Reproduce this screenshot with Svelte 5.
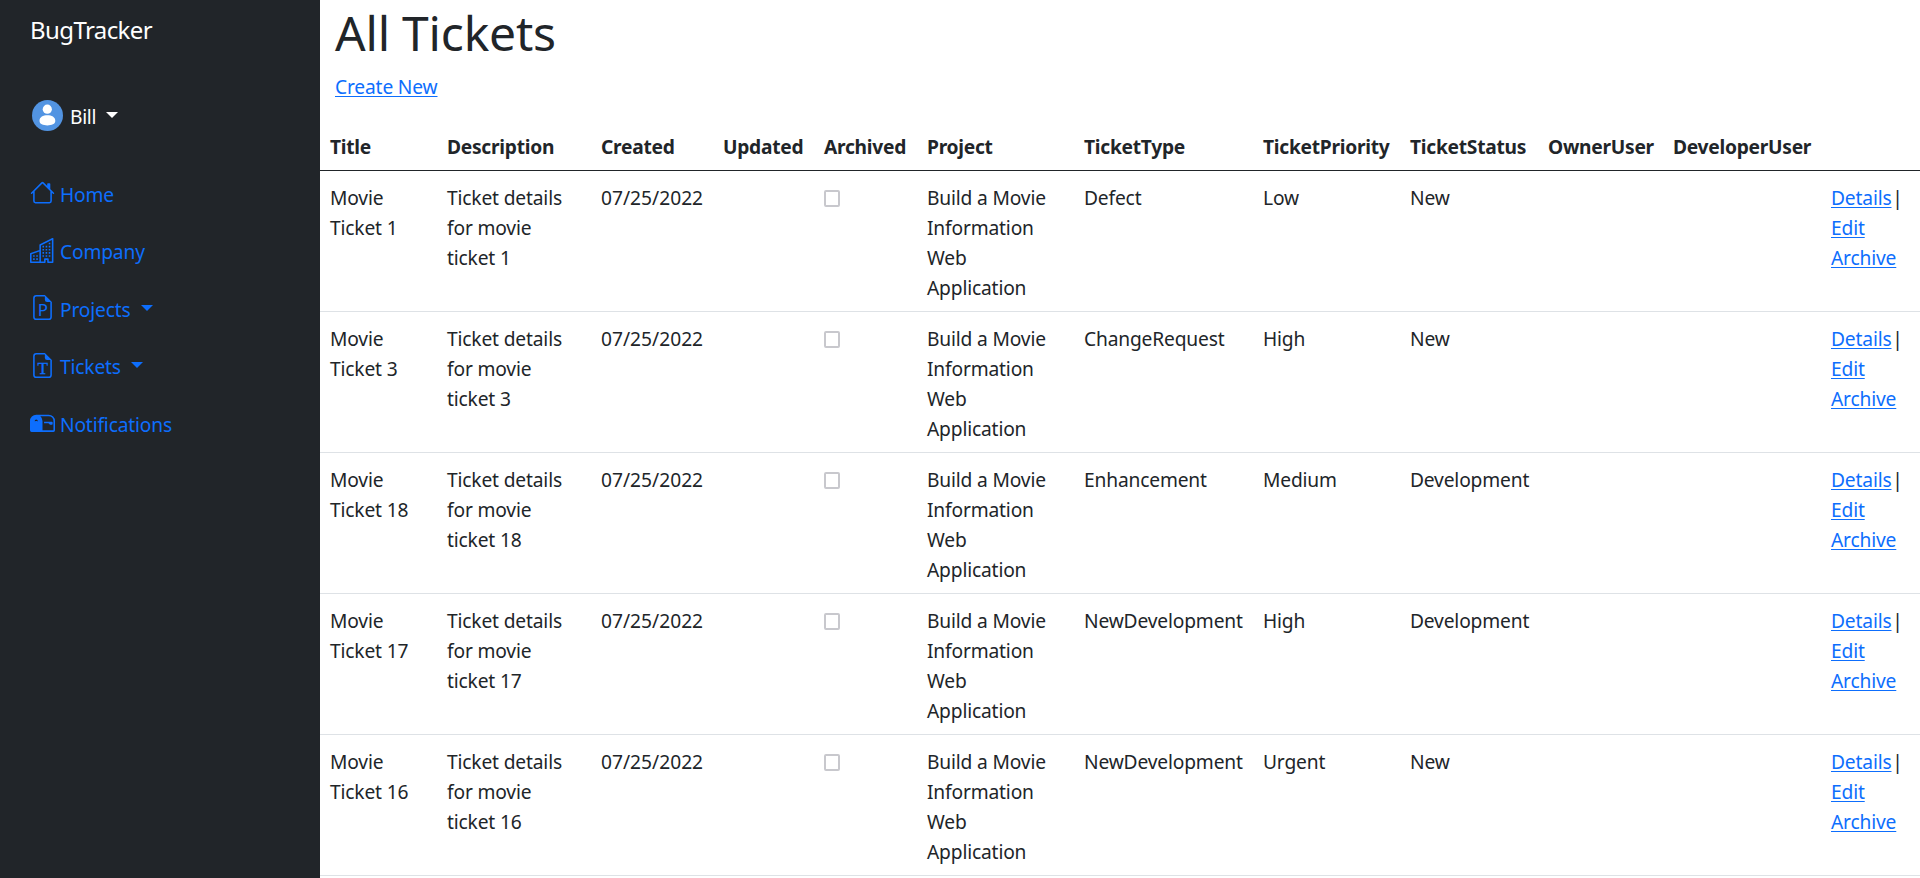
<script>
  const columns = [
    ['Title', 117], ['Description', 154], ['Created', 122], ['Updated', 101],
    ['Archived', 103], ['Project', 157], ['TicketType', 179], ['TicketPriority', 147],
    ['TicketStatus', 138], ['OwnerUser', 125], ['DeveloperUser', 158], ['', 99]
  ];
  const tickets = [
    { id: 1, type: 'Defect', priority: 'Low', status: 'New' },
    { id: 3, type: 'ChangeRequest', priority: 'High', status: 'New' },
    { id: 18, type: 'Enhancement', priority: 'Medium', status: 'Development' },
    { id: 17, type: 'NewDevelopment', priority: 'High', status: 'Development' },
    { id: 16, type: 'NewDevelopment', priority: 'Urgent', status: 'New' }
  ];
  const links = [
    { label: 'Home', icon: 'house' },
    { label: 'Company', icon: 'building' },
    { label: 'Projects', icon: 'file', letter: 'P', menu: true },
    { label: 'Tickets', icon: 'file', letter: 'T', menu: true },
    { label: 'Notifications', icon: 'mailbox' }
  ];
  const paths = {
    house: 'M2 13.5V7h1v6.5a.5.5 0 0 0 .5.5h9a.5.5 0 0 0 .5-.5V7h1v6.5a1.5 1.5 0 0 1-1.5 1.5h-9A1.5 1.5 0 0 1 2 13.5zm11-11V6l-2-2V2.5a.5.5 0 0 1 .5-.5h1a.5.5 0 0 1 .5.5zM7.293 1.5a1 1 0 0 1 1.414 0l6.647 6.646a.5.5 0 0 1-.708.708L8 2.207 1.354 8.854a.5.5 0 1 1-.708-.708L7.293 1.5z',
    building: 'M14.763.075A.5.5 0 0 1 15 .5v15a.5.5 0 0 1-.5.5h-3a.5.5 0 0 1-.5-.5V14h-1v1.5a.5.5 0 0 1-.5.5h-9a.5.5 0 0 1-.5-.5V10a.5.5 0 0 1 .342-.474L6 7.64V4.5a.5.5 0 0 1 .276-.447l8-4a.5.5 0 0 1 .487.022zM6 8.694 1 10.36V15h5V8.694zM7 15h2v-1.5a.5.5 0 0 1 .5-.5h2a.5.5 0 0 1 .5.5V15h2V1.309l-7 3.5V15zM2 11h1v1H2v-1zm2 0h1v1H4v-1zm-2 2h1v1H2v-1zm2 0h1v1H4v-1zm4-4h1v1H8V9zm2 0h1v1h-1V9zm-2 2h1v1H8v-1zm2 0h1v1h-1v-1zm2-2h1v1h-1V9zm0 2h1v1h-1v-1zM8 7h1v1H8V7zm2 0h1v1h-1V7zm2 0h1v1h-1V7zM8 5h1v1H8V5zm2 0h1v1h-1V5zm2 0h1v1h-1V5zm0-2h1v1h-1V3z',
    file: 'M4 0h5.5v1H4a1 1 0 0 0-1 1v12a1 1 0 0 0 1 1h8a1 1 0 0 0 1-1V4.5h1V14a2 2 0 0 1-2 2H4a2 2 0 0 1-2-2V2a2 2 0 0 1 2-2zM9.5 3V0L14 4.5h-3A1.5 1.5 0 0 1 9.5 3z',
    mailbox: 'M9 8.5h2.793l.853.854A.5.5 0 0 0 13 9.5h1a.5.5 0 0 0 .5-.5V8a.5.5 0 0 0-.5-.5H9v1zM12 3H4a4 4 0 0 0-4 4v6a1 1 0 0 0 1 1h14a1 1 0 0 0 1-1V7a4 4 0 0 0-4-4zM8 7a3.99 3.99 0 0 0-1.354-3H12a3 3 0 0 1 3 3v6H8V7zm-3.415.157C4.42 7.087 4.218 7 4 7c-.218 0-.42.086-.585.157C3.164 7.264 3 7.334 3 7a1 1 0 0 1 2 0c0 .334-.164.264-.415.157z'
  };
</script>

<div class="layout">
  <aside>
    <div class="brand">BugTracker</div>
    <div class="user">
      <svg class="avatar" viewBox="0 0 31 31">
        <circle cx="15.5" cy="15.5" r="15.5" fill="#5294e2" />
        <circle cx="15.3" cy="9.2" r="4.6" fill="#fff" />
        <path d="M7.5 20.8c0-3.700 3.600-5.500 7.900-5.500s7.900 1.800 7.900 5.500c0 3.400-3.600 4.600-7.900 4.600s-7.900-1.200-7.900-4.600z" fill="#fff" />
      </svg>
      <span>Bill</span>
      <i class="caret"></i>
    </div>
    <nav>
      {#each links as link}
        <a class="item" href="#top">
          <svg viewBox="0 0 16 16" fill="currentColor">
            <path d={paths[link.icon]} />
            {#if link.letter}
              <text x="8.2" y="13.3" text-anchor="middle" class:serif={link.letter === 'T'}>{link.letter}</text>
            {/if}
          </svg>
          <span>{link.label}</span>
          {#if link.menu}<i class="caret"></i>{/if}
        </a>
      {/each}
    </nav>
  </aside>

  <main>
    <h1>All Tickets</h1>
    <p><a href="#top">Create New</a></p>
    <table>
      <colgroup>
        {#each columns as column}<col style:width="{column[1]}px" />{/each}
      </colgroup>
      <thead>
        <tr>{#each columns as column}<th>{column[0]}</th>{/each}</tr>
      </thead>
      <tbody>
        {#each tickets as t}
          <tr>
            <td>Movie Ticket {t.id}</td>
            <td>Ticket details for movie ticket {t.id}</td>
            <td class="date">07/25/2022</td>
            <td></td>
            <td><span class="check"></span></td>
            <td>Build a Movie Information Web Application</td>
            <td>{t.type}</td>
            <td>{t.priority}</td>
            <td>{t.status}</td>
            <td></td>
            <td></td>
            <td><a href="#top">Details</a> <span class="bar">|</span> <a href="#top">Edit</a> <a href="#top">Archive</a></td>
          </tr>
        {/each}
      </tbody>
    </table>
  </main>
</div>

<style>
  :global(body) {
    margin: 0;
    overflow: hidden;
  }
  .layout {
    display: flex;
    width: 1920px;
    height: 878px;
    overflow: hidden;
    background: #fff;
    color: #212529;
    font: 19.2px/30px 'Noto Sans', 'Open Sans', sans-serif;
    letter-spacing: -0.16px;
  }
  aside {
    flex: 0 0 320px;
    box-sizing: border-box;
    padding: 11px 30px 0;
    background: #212529;
  }
  .brand {
    height: 38px;
    font-size: 24px;
    line-height: 38px;
    letter-spacing: -0.6px;
    color: #fff;
  }
  .user {
    display: flex;
    align-items: center;
    height: 31px;
    margin: 51px 0 33px 2px;
    color: #fff;
  }
  .avatar {
    width: 31px;
    height: 31px;
    margin-right: 7px;
  }
  .user span {
    padding-top: 3px;
    letter-spacing: -0.3px;
  }
  .item span {
    padding-top: 4px;
  }
  .caret {
    margin-left: 10.5px;
    border: 6px solid transparent;
    border-top-color: currentColor;
    border-bottom: 0;
  }
  .user .caret {
    margin-left: 10px;
    margin-bottom: 1px;
  }
  .item {
    display: flex;
    align-items: center;
    height: 57.5px;
    color: #0d6efd;
    text-decoration: none;
  }
  .item svg {
    width: 25px;
    height: 25px;
    margin-right: 5px;
  }
  .item text {
    font: 10.8px 'Noto Sans', sans-serif;
    letter-spacing: 0;
  }
  .item text.serif {
    font: 11px 'Liberation Serif', serif;
    stroke: currentColor;
    stroke-width: 0.2px;
  }
  main {
    flex: 0 0 1600px;
  }
  h1 {
    margin: 0 15px;
    padding-top: 2px;
    height: 70px;
    font-size: 48px;
    font-weight: 400;
    line-height: 62px;
    letter-spacing: -0.2px;
  }
  p {
    margin: 0 15px 18px;
  }
  main a {
    color: #0d6efd;
    text-decoration: underline;
    text-decoration-thickness: 1px;
    text-underline-offset: 2px;
  }
  table {
    width: 1600px;
    table-layout: fixed;
    border-collapse: separate;
    border-spacing: 0;
  }
  th,
  td {
    padding: 12px 10px 8px;
    text-align: left;
    vertical-align: top;
    border-bottom: 1px solid #dee2e6;
  }
  th {
    font-weight: 700;
    white-space: nowrap;
    letter-spacing: -0.26px;
    border-bottom-color: #212529;
  }
  td.date {
    letter-spacing: 0;
  }
  .bar {
    margin-left: -4px;
  }
  .check {
    display: block;
    box-sizing: border-box;
    width: 16px;
    height: 17px;
    margin-top: 7px;
    border: 2px solid #c8c8cd;
    border-radius: 2px;
  }
</style>
